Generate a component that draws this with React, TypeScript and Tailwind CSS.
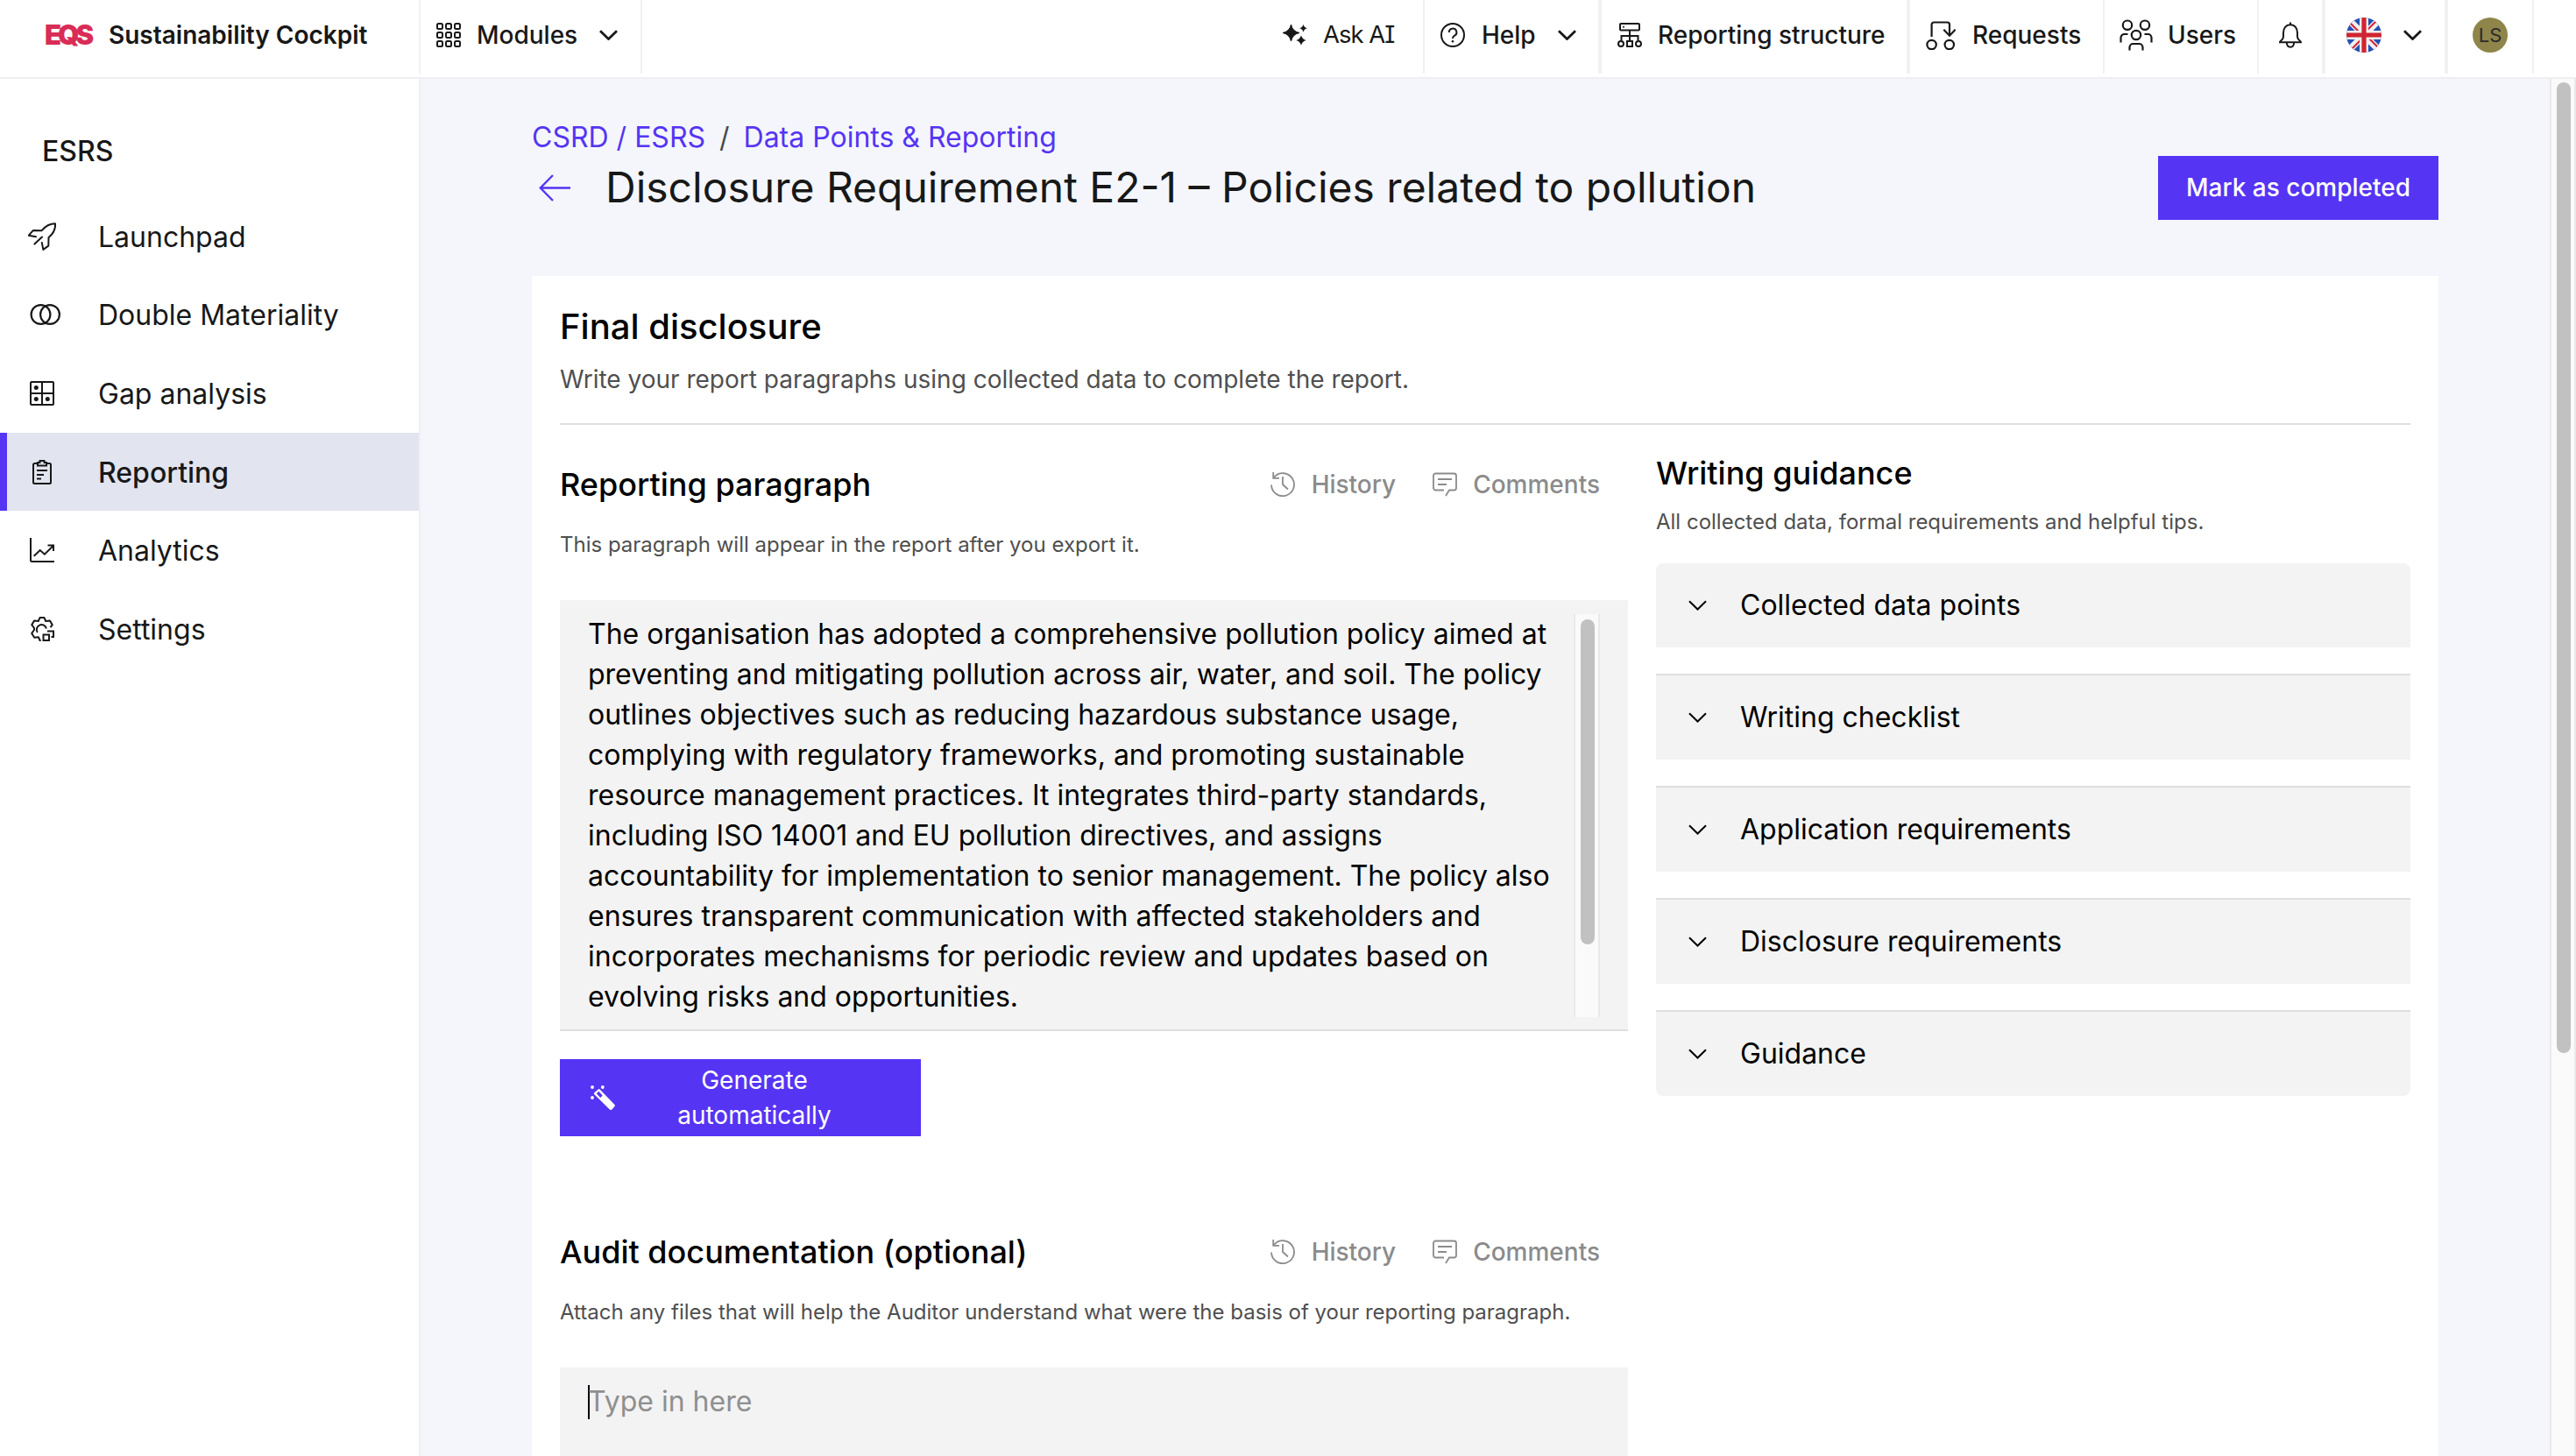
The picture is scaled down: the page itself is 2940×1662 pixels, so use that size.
import React from 'react';
import clsx from 'clsx';

type IconProps = { className?: string };

/* ICONS */

const GridIcon = () => (
  <svg className="h-7 w-7 shrink-0" viewBox="0 0 28 28" fill="none" stroke="currentColor" strokeWidth="2">
    {[1, 11, 21].map((y) =>
      [1, 11, 21].map((x) => <rect key={`${x}-${y}`} x={x} y={y} width="6" height="6" rx="1.5" />)
    )}
  </svg>
);

const Chevron = ({ className }: IconProps) => (
  <svg className={clsx('h-3 w-[21px] shrink-0', className)} viewBox="0 0 21 12" fill="none" stroke="currentColor">
    <path d="M1 1.2l9.5 9.3L20 1.2" />
  </svg>
);

const SparkleIcon = () => (
  <svg className="h-7 w-7 shrink-0" viewBox="0 0 28 28" fill="currentColor">
    <path d="M9.5 2q1.6 7.900 9.500 9.500q-7.900 1.600-9.500 9.500q-1.600-7.900-9.500-9.500q7.900-1.600 9.500-9.500z" stroke="currentColor" strokeLinejoin="round" />
    <path d="M23.500 1.800q.9 3.600 4.500 4.500q-3.600.9-4.500 4.500q-.9-3.600-4.500-4.500q3.600-.9 4.500-4.500z" />
    <path d="M21 14.200q1.200 4.600 5.800 5.800q-4.600 1.200-5.800 5.800q-1.200-4.600-5.800-5.800q4.600-1.200 5.800-5.800z" />
  </svg>
);

const HelpIcon = () => (
  <svg className="h-7 w-7 shrink-0" viewBox="0 0 28 28" fill="none" stroke="currentColor" strokeWidth="2">
    <circle cx="14" cy="14" r="13" />
    <path d="M9.800 10.900a4.300 4.300 0 1 1 6.300 3.800c-1.400.8-2.100 1.500-2.100 3.300" />
    <circle cx="14" cy="21.300" r="1.300" fill="currentColor" stroke="none" />
  </svg>
);

const StructureIcon = () => (
  <svg className="h-7 w-7 shrink-0" viewBox="0 0 28 28" fill="none" stroke="currentColor" strokeWidth="2">
    <rect x="3" y="1" width="22" height="7.500" rx="1" />
    <path d="M14 8.500V20M4.500 20.500v-5.500h19v5.500" />
    <circle cx="4" cy="24" r="3" />
    <circle cx="24" cy="24" r="3" />
    <rect x="11" y="21" width="6" height="6" />
    <circle cx="7" cy="4.800" r="1" fill="currentColor" stroke="none" />
  </svg>
);

const RequestsIcon = () => (
  <svg className="h-[34px] w-[34px] shrink-0" viewBox="0 0 34 34" fill="none" stroke="currentColor" strokeWidth="2.200">
    <path d="M6.600 19V5a2.500 2.500 0 0 1 2.500-2.500h15.500A2.500 2.500 0 0 1 27 5v12.500M20.300 10.700l6.700 7 6.700-7" />
    <circle cx="6.600" cy="28" r="5.200" />
    <circle cx="26.800" cy="28" r="5.200" />
  </svg>
);

const UsersIcon = () => (
  <svg className="h-9 w-[38px] shrink-0" viewBox="0 0 38 36" fill="none" stroke="currentColor" strokeWidth="2.200">
    <circle cx="9" cy="6.700" r="5.200" />
    <circle cx="29" cy="6.700" r="5.200" />
    <circle cx="19" cy="18" r="5.200" />
    <path d="M1.500 26.500V21a4 4 0 0 1 4-4H9.500M36.500 26.500V21a4 4 0 0 0-4-4H28.500M11.500 35.500V32a4 4 0 0 1 4-4h7a4 4 0 0 1 4 4v3.500" />
  </svg>
);

const BellIcon = () => (
  <svg className="h-[30px] w-7 shrink-0" viewBox="0 0 28 30" fill="none" stroke="currentColor" strokeWidth="2">
    <path d="M14 .5V3.500M14 3.300c-5 0-8 4-8 9v4.500c0 1.700-.6 2.600-1.700 3.700C3 21.500 2 22 2 23.200h24c0-1.200-1-1.700-2.300-2.700-1.100-1.100-1.700-2-1.700-3.700v-4.500c0-5-3-9-8-9z" />
    <path d="M9.800 23.500c.2 3.200 1.900 5.300 4.200 5.300s4-2.100 4.200-5.300" />
  </svg>
);

const UkFlag = () => (
  <svg className="h-10 w-10 shrink-0" viewBox="0 0 40 40">
    <clipPath id="flag-round">
      <circle cx="20" cy="20" r="20" />
    </clipPath>
    <g clipPath="url(#flag-round)">
      <rect width="40" height="40" fill="#2351b4" />
      <path d="M3 3l34 34M37 3L3 37" stroke="#f0f0f0" strokeWidth="7.500" />
      <path d="M2.500 4.500l14 14M37.500 35.500l-14-14M35.500 2.500l-14 14M4.500 37.500l14-14" stroke="#d4283a" strokeWidth="2.200" />
      <path d="M20 0v40M0 20h40" stroke="#f0f0f0" strokeWidth="10" />
      <path d="M20 0v40M0 20h40" stroke="#cf2530" strokeWidth="5.200" />
    </g>
  </svg>
);

const RocketIcon = () => (
  <svg className="h-8 w-8" viewBox="0 0 32 32" fill="none" stroke="currentColor" strokeWidth="2" strokeLinejoin="round" strokeLinecap="round">
    <path d="M9 16.200l-8.200-1.500L6 8.900l9.600.3C19.500 4.500 24 1.200 31 1.300c.6 7-2.500 11.800-7.500 15.700l-.2 9.600-6 4.300-1.500-8" />
    <path d="M16 16.500l-8.600 8.100" />
  </svg>
);

const CirclesIcon = () => (
  <svg className="h-6 w-9" viewBox="0 0 36 24" fill="none" stroke="currentColor" strokeWidth="2.200">
    <circle cx="12.500" cy="12" r="10.900" />
    <circle cx="23" cy="12" r="10.900" />
  </svg>
);

const GapIcon = () => (
  <svg className="h-7 w-7" viewBox="0 0 28 28" fill="none" stroke="currentColor" strokeWidth="2">
    <rect x="1" y="1" width="26" height="26" rx="1" />
    <path d="M14 1v26M1 14h26" />
    <g fill="currentColor" stroke="none">
      <circle cx="7.300" cy="7.500" r="2.500" />
      <circle cx="7.300" cy="20.500" r="2.500" />
      <circle cx="20.300" cy="20.500" r="2.500" />
    </g>
  </svg>
);

const ClipboardIcon = () => (
  <svg className="h-7 w-7" viewBox="0 0 28 28" fill="none" stroke="currentColor" strokeWidth="2">
    <path d="M9 4H5.500A1.500 1.500 0 0 0 4 5.500v20A1.500 1.500 0 0 0 5.500 27h17a1.500 1.500 0 0 0 1.500-1.500v-20A1.500 1.500 0 0 0 22.500 4H19" />
    <path d="M9 6.500V3h2.500V1h5v2H19v3.500zM8 12h12M8 17h8M8 21.500h5" />
  </svg>
);

const AnalyticsIcon = () => (
  <svg className="h-7 w-7" viewBox="0 0 28 28" fill="none" stroke="currentColor" strokeWidth="2">
    <path d="M1 0v25.500A1.500 1.500 0 0 0 2.500 27H28" />
    <path d="M4.700 20.800l7-6.800 5.200 4.700L27 8.800M20.500 8.500H27v6.500" />
  </svg>
);

const SettingsIcon = () => (
  <svg className="h-7 w-7" viewBox="0 0 28 28" fill="none" stroke="currentColor" strokeWidth="2" strokeLinejoin="round">
    <path d="M12.700 27h-1.200l-1.600-3.800-4.700.6-3-4.900L5 15v-2L2.200 9.200l3-4.800 4.600.6 1.700-3.900h5l1.700 3.900 4.600-.6 3 4.800-2.300 3" />
    <path d="M8.900 18a5.600 5.600 0 1 1 10-4.500" />
    <path d="M15.500 20.500h6.500V27h-6.500zM20 16.500h7v6.500h-2.500" strokeLinejoin="miter" />
  </svg>
);

const BackArrow = () => (
  <svg className="h-8 w-9" viewBox="0 0 36 32" fill="none" stroke="currentColor" strokeWidth="2.400">
    <path d="M36 15.500H2M16 1L1.800 15.500 16 30" />
  </svg>
);

const HistoryIcon = () => (
  <svg className="h-7 w-7 shrink-0" viewBox="0 0 28 28" fill="none" stroke="currentColor" strokeWidth="1.800">
    <path d="M1 14.500A13 13 0 1 0 4.500 5.300L3.400 6.500M3.200 0v6.800H10M14 5v9l6 5.500" />
  </svg>
);

const CommentIcon = () => (
  <svg className="h-7 w-7 shrink-0" viewBox="0 0 28 28" fill="none" stroke="currentColor" strokeWidth="1.800">
    <path d="M13 20.500H3.500A2.500 2.500 0 0 1 1 18V4a2.500 2.500 0 0 1 2.500-2.500h21A2.500 2.500 0 0 1 27 4v14a2.500 2.500 0 0 1-2.500 2.500h-5.500l-4 6.500M6 8h16M6 14h10" />
  </svg>
);

const WandIcon = () => (
  <svg className="mt-0.5 h-[30px] w-7 shrink-0" viewBox="0 0 28 30" fill="currentColor">
    <path fillRule="evenodd" d="M4.400 8.300l4.300-3.900q1-.7 1.900.2L27.300 21.800q1 1.200 0 2.400l-3 3.200q-1.200 1-2.400 0L4.300 10.300q-.8-1 .1-2zM6.800 9.200l2.600-2.400 4.300 4.600-2.500 2.500z" />
    <circle cx="2" cy="2" r="1.900" />
    <circle cx="13.800" cy="2" r="1.900" />
    <circle cx="2" cy="14" r="1.900" />
  </svg>
);

/* DATA */

const NAV_ITEMS = [
  { label: 'Launchpad', icon: <RocketIcon />, offset: 'pl-8' },
  { label: 'Double Materiality', icon: <CirclesIcon />, offset: 'pl-[34px]' },
  { label: 'Gap analysis', icon: <GapIcon />, offset: 'pl-[34px]' },
  { label: 'Reporting', icon: <ClipboardIcon />, offset: 'pl-[26px]', active: true },
  { label: 'Analytics', icon: <AnalyticsIcon />, offset: 'pl-[34px]' },
  { label: 'Settings', icon: <SettingsIcon />, offset: 'pl-[34px]' },
];

const GUIDANCE = [
  'Collected data points',
  'Writing checklist',
  'Application requirements',
  'Disclosure requirements',
  'Guidance',
];

const PARAGRAPH =
  'The organisation has adopted a comprehensive pollution policy aimed at preventing and mitigating pollution across air, water, and soil. The policy outlines objectives such as reducing hazardous substance usage, complying with regulatory frameworks, and promoting sustainable resource management practices. It integrates third-party standards, including ISO 14001 and EU pollution directives, and assigns accountability for implementation to senior management. The policy also ensures transparent communication with affected stakeholders and incorporates mechanisms for periodic review and updates based on evolving risks and opportunities.';

/* PARTS */

function HeaderCell({ className, children }: { className?: string; children?: React.ReactNode }) {
  return (
    <div className={clsx('flex h-[84px] shrink-0 items-center border-[#f1f1f1] pb-1 text-[28px] font-medium whitespace-nowrap', className)}>
      {children}
    </div>
  );
}

function SectionHeading({ title }: { title: string }) {
  return (
    <div className="flex h-12 items-center justify-between pr-8">
      <h3 className="text-4xl font-medium">{title}</h3>
      <div className="flex items-center text-[28px] font-medium text-[#8b8b8b]">
        <HistoryIcon />
        <span className="ml-[19px]">History</span>
        <span className="ml-[42px] flex items-center">
          <CommentIcon />
          <span className="ml-[18px]">Comments</span>
        </span>
      </div>
    </div>
  );
}

export default function App() {
  return (
    <div className="flex h-[1662px] w-[2940px] flex-col overflow-hidden bg-white font-['Inter',sans-serif] text-[#181818]">
      {/* TOP BAR */}
      <header className="flex h-[90px] shrink-0 items-start border-b-2 border-[#efeff1]">
        <HeaderCell className="w-[480px] border-r-2 pl-[51px]">
          <span className="w-[73px] text-[31px] font-black tracking-[-4px] text-[#d92c56]">EQS</span>
          <span className="font-semibold">Sustainability Cockpit</span>
        </HeaderCell>
        <HeaderCell className="w-[253px] border-r-2 pl-[18px]">
          <GridIcon />
          <span className="ml-[18px]">Modules</span>
          <Chevron className="ml-[25px] stroke-[2.8]" />
        </HeaderCell>
        <div className="flex-1" />
        <HeaderCell className="w-[162px] border-r-2">
          <SparkleIcon />
          <span className="ml-[18px] text-[27.500px] font-normal tracking-[-1px] [font-feature-settings:'cv08']">Ask AI</span>
        </HeaderCell>
        <HeaderCell className="w-[200px] border-r-2 pl-[18px]">
          <HelpIcon />
          <span className="ml-[19px]">Help</span>
          <Chevron className="ml-[25px] stroke-[2.8]" />
        </HeaderCell>
        <HeaderCell className="w-[352px] border-x-2 pl-[18px]">
          <StructureIcon />
          <span className="ml-[18px]">Reporting structure</span>
        </HeaderCell>
        <HeaderCell className="w-[224px] border-x-2 pl-[18px]">
          <RequestsIcon />
          <span className="ml-[19px]">Requests</span>
        </HeaderCell>
        <HeaderCell className="w-[176px] border-r-2 pl-[17px]">
          <UsersIcon />
          <span className="ml-[17px]">Users</span>
        </HeaderCell>
        <HeaderCell className="w-[74px] border-r-2 pl-[22px]">
          <BellIcon />
        </HeaderCell>
        <HeaderCell className="w-[140px] border-x-2 pl-6">
          <UkFlag />
          <Chevron className="ml-[25px] stroke-[2.8]" />
        </HeaderCell>
        <HeaderCell className="w-[100px] border-x-2 pl-7">
          <span className="flex h-10 w-10 items-center justify-center rounded-full bg-[#8f844a] text-[22px] font-normal text-[#2b2b2b]">LS</span>
        </HeaderCell>
        <div className="w-12" />
      </header>

      <div className="flex min-h-0 flex-1">
        {/* SIDEBAR */}
        <aside className="w-[480px] shrink-0 border-r-2 border-[#f0f0f3]">
          <div className="h-[135px] pt-[51px] pl-12 text-[32px] leading-[64px] font-medium">ESRS</div>
          <nav>
            {NAV_ITEMS.map((item) => (
              <a
                key={item.label}
                className={clsx(
                  'flex h-[89.600px] items-center text-[32px]',
                  item.active && 'border-l-8 border-[#5634f4] bg-[#e2e4ef] font-medium'
                )}
              >
                <span className={clsx('shrink-0', item.offset, item.active ? 'w-[104px]' : 'w-28')}>{item.icon}</span>
                <span className="pt-0.5">{item.label}</span>
              </a>
            ))}
          </nav>
        </aside>

        {/* CONTENT */}
        <main className="flex-1 bg-[#f4f6fb] pt-11 pr-[127px] pl-[127px]">
          <div className="flex h-11 items-center pt-0.5 text-[32px] text-[#5634f4]">
            <span>CSRD / ESRS</span>
            <span className="mx-4 text-[#4a4a4a]">/</span>
            <span>Data Points &amp; Reporting</span>
          </div>
          <div className="flex h-[73px] items-center">
            <span className="w-[84px] pl-2 text-[#5634f4]">
              <BackArrow />
            </span>
            <h1 className="flex-1 pb-0.5 text-5xl">Disclosure Requirement E2-1 – Policies related to pollution</h1>
            <button className="h-[73px] w-[320px] bg-[#5634f4] pb-px text-[28px] font-medium text-white">Mark as completed</button>
          </div>

          <section className="mt-16 h-[1400px] bg-white px-8 pt-[34px] text-black">
            <h2 className="h-12 text-[40px] leading-[48px] font-medium">Final disclosure</h2>
            <p className="mt-4 h-10 text-[28px] leading-10 text-[#4f4f4f]">
              Write your report paragraphs using collected data to complete the report.
            </p>
            <div className="mt-[30px] h-0.5 bg-[#dfdfdf]" />

            <div className="flex gap-8">
              <div className="w-[1219px] pt-11">
                <SectionHeading title="Reporting paragraph" />
                <p className="mt-[25px] text-2xl leading-10 text-[#4f4f4f]">
                  This paragraph will appear in the report after you export it.
                </p>
                <div className="mt-[43px] flex h-[492px] border-b-2 border-[#dfdfdf] bg-[#f3f3f3] pt-4 pr-8 pb-[14px] pl-8">
                  <p className="w-[1125px] text-[32px] leading-[46px]">{PARAGRAPH}</p>
                  <div className="w-[30px] border-x-2 border-[#e9e9e9] bg-[#fafafa] pt-1.5 pl-1.5">
                    <div className="h-[371px] w-4 rounded-full bg-[#c1c1c1]" />
                  </div>
                </div>
                <button className="mt-8 flex h-[88px] w-[412px] items-center bg-[#5634f4] pl-[35px] text-[28px] leading-10 text-white">
                  <WandIcon />
                  <span className="w-[318px] text-center">
                    Generate
                    <br />
                    automatically
                  </span>
                </button>

                <div className="mt-[108px]">
                  <SectionHeading title="Audit documentation (optional)" />
                </div>
                <p className="mt-[25px] text-2xl leading-10 text-[#4f4f4f]">
                  Attach any files that will help the Auditor understand what were the basis of your reporting paragraph.
                </p>
                <div className="mt-[43px] flex h-[300px] items-start bg-[#f3f3f3] pt-5 pl-8">
                  <span className="-mr-0.5 h-[39px] w-0.5 bg-black" />
                  <span className="text-[32px] leading-[38px] text-[#8f8f8f]">Type in here</span>
                </div>
              </div>

              <div className="flex-1 pt-[31px]">
                <h3 className="h-12 text-4xl leading-[48px] font-medium">Writing guidance</h3>
                <p className="mt-3 text-2xl leading-10 text-[#4f4f4f]">
                  All collected data, formal requirements and helpful tips.
                </p>
                <div className="mt-[27px] flex flex-col gap-[30px]">
                  {GUIDANCE.map((item, i) => (
                    <div
                      key={item}
                      className={clsx(
                        'flex items-center bg-[#f3f3f3] pl-[37px] text-[32px]',
                        i === 0 ? 'h-24 rounded-t-lg' : 'h-[98px] border-t-2 border-[#dfdfdf]',
                        i === GUIDANCE.length - 1 && 'rounded-b-lg'
                      )}
                    >
                      <Chevron className="stroke-2" />
                      <span className="ml-[38px]">{item}</span>
                    </div>
                  ))}
                </div>
              </div>
            </div>
          </section>
        </main>

        {/* PAGE SCROLLBAR */}
        <div className="w-[30px] shrink-0 border-x-2 border-[#e9e9e9] bg-[#fafafa] pt-1 pl-1.5">
          <div className="h-[1108px] w-4 rounded-full bg-[#c1c1c1]" />
        </div>
      </div>
    </div>
  );
}
